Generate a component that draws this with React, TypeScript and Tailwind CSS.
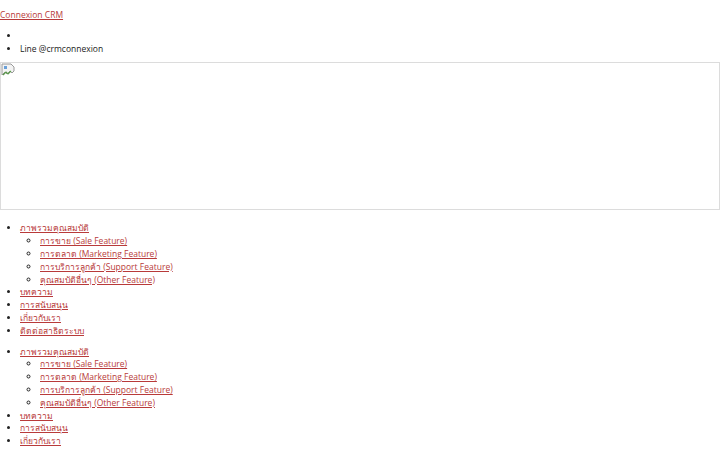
const menu = [
  {
    label: 'ภาพรวมคุณสมบัติ',
    children: [
      'การขาย (Sale Feature)',
      'การตลาด (Marketing Feature)',
      'การบริการลูกค้า (Support Feature)',
      'คุณสมบัติอื่นๆ (Other Feature)',
    ],
  },
  { label: 'บทความ' },
  { label: 'การสนับสนุน' },
  { label: 'เกี่ยวกับเรา' },
  { label: 'ติดต่อสาธิตระบบ' },
];

function BrokenImage() {
  return (
    <svg width="16" height="16" viewBox="0 0 16 16" className="block">
      <path d="M1 1h9l3 3v4l-2 2-2-2-3 3-2-2-3 3z" fill="#f3f3f3" stroke="#9a9a9a" strokeWidth="1" />
      <path d="M2 12l3-3 2 2 3-3" fill="none" stroke="#5a9a4a" strokeWidth="1.2" />
      <rect x="3" y="3" width="3" height="3" fill="#6aa0d8" />
    </svg>
  );
}

function Menu() {
  return (
    <ul className="list-disc pl-5">
      {menu.map((item) => (
        <li key={item.label}>
          <a href="#" className="text-[#b83a3a] underline underline-offset-1">
            {item.label}
          </a>
          {item.children && (
            <ul className="list-[circle] pl-5">
              {item.children.map((c) => (
                <li key={c}>
                  <a href="#" className="text-[#b83a3a] underline underline-offset-1">
                    {c}
                  </a>
                </li>
              ))}
            </ul>
          )}
        </li>
      ))}
    </ul>
  );
}

export default function App() {
  return (
    <div className="min-h-[450px] bg-white text-[8.5px] leading-[12.8px] font-medium text-[#222] font-['Open_Sans','Noto_Sans',sans-serif]">
      {/* Header */}
      <div className="pt-[9px]">
        <a href="#" className="text-[#b83a3a] underline underline-offset-1">
          Connexion CRM
        </a>
      </div>
      <ul className="list-disc pl-5 mt-[8px] mb-[7px]">
        <li>&nbsp;</li>
        <li>Line @crmconnexion</li>
      </ul>

      {/* Banner image */}
      <div className="h-[148px] border border-[#dcdcdc]">
        <BrokenImage />
      </div>

      {/* Nav menus */}
      <div className="mt-[12px]">
        <Menu />
      </div>
      <div className="mt-[8px]">
        <Menu />
      </div>
    </div>
  );
}
